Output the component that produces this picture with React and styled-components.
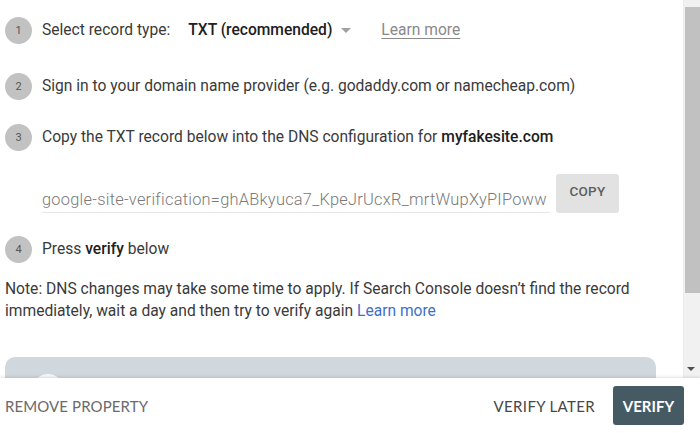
import React from "react";
import styled, { createGlobalStyle } from "styled-components";

const GlobalStyle = createGlobalStyle`
  html, body {
    margin: 0;
    padding: 0;
    background: #ffffff;
  }
  body {
    font-family: Roboto, "Liberation Sans", Arial, sans-serif;
  }
`;

const Frame = styled.div`
  width: 700px;
  height: 433px;
  display: flex;
  flex-direction: column;
  overflow: hidden;
  background: #fff;
`;

const Body = styled.div`
  height: 378px;
  display: flex;
  overflow: hidden;
`;

const Content = styled.div`
  flex: 1;
  padding: 0 0 0 5px;
  overflow: hidden;
  color: #3a3a3a;
  font-size: 15.6px;
`;

const Step = styled.div`
  display: flex;
  align-items: center;
  height: 26px;
  margin-top: ${(p) => p.$top}px;
`;

const Badge = styled.span`
  width: 27px;
  height: 27px;
  border-radius: 50%;
  background: #c2c2c2;
  color: #555;
  font-size: 11px;
  display: flex;
  align-items: center;
  justify-content: center;
  margin-right: 10px;
  flex-shrink: 0;
`;

const StepText = styled.span`
  white-space: nowrap;
  color: #3a3a3a;
`;

const Strong = styled.b`
  font-weight: 500;
  color: #202020;
`;

const Select = styled.span`
  display: inline-flex;
  align-items: center;
  margin-left: 18px;
  font-weight: 500;
  color: #202020;
`;

const Caret = styled.span`
  width: 0;
  height: 0;
  margin-left: 9px;
  border-left: 5px solid transparent;
  border-right: 5px solid transparent;
  border-top: 5px solid #a0a0a0;
`;

const GrayLink = styled.a`
  margin-left: 30px;
  color: #8a8a8a;
  text-decoration: underline;
  text-underline-offset: 3px;
`;

const CodeRow = styled.div`
  display: flex;
  align-items: stretch;
  height: 39px;
  margin: 24px 0 0 37px;
`;

const CodeField = styled.div`
  width: 508px;
  overflow: hidden;
  white-space: nowrap;
  color: #7a7a7a;
  font-weight: 300;
  font-size: 16.4px;
  letter-spacing: 0.25px;
  display: flex;
  align-items: flex-end;
  padding-bottom: 3px;
  border-bottom: 1px solid #e6e6e6;
  box-sizing: border-box;
`;

const CopyButton = styled.button`
  margin-left: 6px;
  width: 63px;
  border: none;
  border-radius: 3px;
  background: #e2e2e2;
  color: #5e5e5e;
  font-family: Roboto, "Liberation Sans", sans-serif;
  font-size: 13.5px;
  font-weight: 500;
  letter-spacing: 0.3px;
  padding: 0 0 5px;
`;

const Note = styled.p`
  margin: 16px 0 0;
  line-height: 22px;
  color: #3a3a3a;
`;

const BlueLink = styled.a`
  color: #3f6fc8;
  text-decoration: none;
`;

const Card = styled.div`
  margin-top: 35px;
  width: 651px;
  height: 60px;
  background: #d0d8dd;
  border-radius: 10px 10px 0 0;
  padding: 17px 0 0 28px;
  box-sizing: border-box;
`;

const Avatar = styled.div`
  width: 30px;
  height: 30px;
  border-radius: 50%;
  background: #f7f8f9;
`;

const Scrollbar = styled.div`
  width: 17px;
  background: #f1f1f1;
  border-left: 1px solid #ececec;
  display: flex;
  flex-direction: column;
  align-items: flex-end;
  padding-top: 7px;
  box-sizing: border-box;
`;

const Thumb = styled.div`
  width: 15px;
  height: 286px;
  background: #c1c1c1;
`;

const DownArrow = styled.div`
  margin: auto 5px 7px 0;
  width: 0;
  height: 0;
  border-left: 4px solid transparent;
  border-right: 4px solid transparent;
  border-top: 4px solid #505050;
`;

const Footer = styled.div`
  flex: 1;
  display: flex;
  align-items: center;
  padding: 0 16px 0 5px;
  background: #fff;
  box-shadow: 0 -1px 3px rgba(0, 0, 0, 0.12);
  font-family: Lato, "Open Sans", sans-serif;
  font-size: 15px;
  position: relative;
`;

const TextButton = styled.button`
  border: none;
  background: none;
  padding: 0;
  font-family: inherit;
  font-size: 15px;
  color: ${(p) => (p.$dark ? "#474747" : "#6a6a6a")};
  letter-spacing: ${(p) => (p.$dark ? 0.35 : 0.1)}px;
  margin-right: ${(p) => (p.$gap ? p.$gap : 0)}px;
`;

const Spacer = styled.div`
  flex: 1;
`;

const PrimaryButton = styled.button`
  width: 71px;
  height: 39px;
  border: none;
  border-radius: 3px;
  background: #465a64;
  color: #fff;
  font-family: inherit;
  font-size: 15px;
  font-weight: 700;
`;

export default function App() {
  return (
    <Frame>
      <GlobalStyle />
      <Body>
        <Content>
          <Step $top={17}>
            <Badge>1</Badge>
            <StepText>Select record type:</StepText>
            <Select>
              TXT (recommended)
              <Caret />
            </Select>
            <GrayLink>Learn more</GrayLink>
          </Step>
          <Step $top={30}>
            <Badge>2</Badge>
            <StepText>
              Sign in to your domain name provider (e.g. godaddy.com or namecheap.com)
            </StepText>
          </Step>
          <Step $top={25}>
            <Badge>3</Badge>
            <StepText>
              Copy the TXT record below into the DNS configuration for{" "}
              <Strong>myfakesite.com</Strong>
            </StepText>
          </Step>
          <CodeRow>
            <CodeField>
              google-site-verification=ghABkyuca7_KpeJrUcxR_mrtWupXyPIPoww
            </CodeField>
            <CopyButton>COPY</CopyButton>
          </CodeRow>
          <Step $top={23}>
            <Badge>4</Badge>
            <StepText>
              Press <Strong>verify</Strong> below
            </StepText>
          </Step>
          <Note>
            Note: DNS changes may take some time to apply. If Search Console doesn’t find the record
            <br />
            immediately, wait a day and then try to verify again <BlueLink>Learn more</BlueLink>
          </Note>
          <Card>
            <Avatar />
          </Card>
        </Content>
        <Scrollbar>
          <Thumb />
          <DownArrow />
        </Scrollbar>
      </Body>
      <Footer>
        <TextButton>REMOVE PROPERTY</TextButton>
        <Spacer />
        <TextButton $dark $gap={18}>VERIFY LATER</TextButton>
        <PrimaryButton>VERIFY</PrimaryButton>
      </Footer>
    </Frame>
  );
}
